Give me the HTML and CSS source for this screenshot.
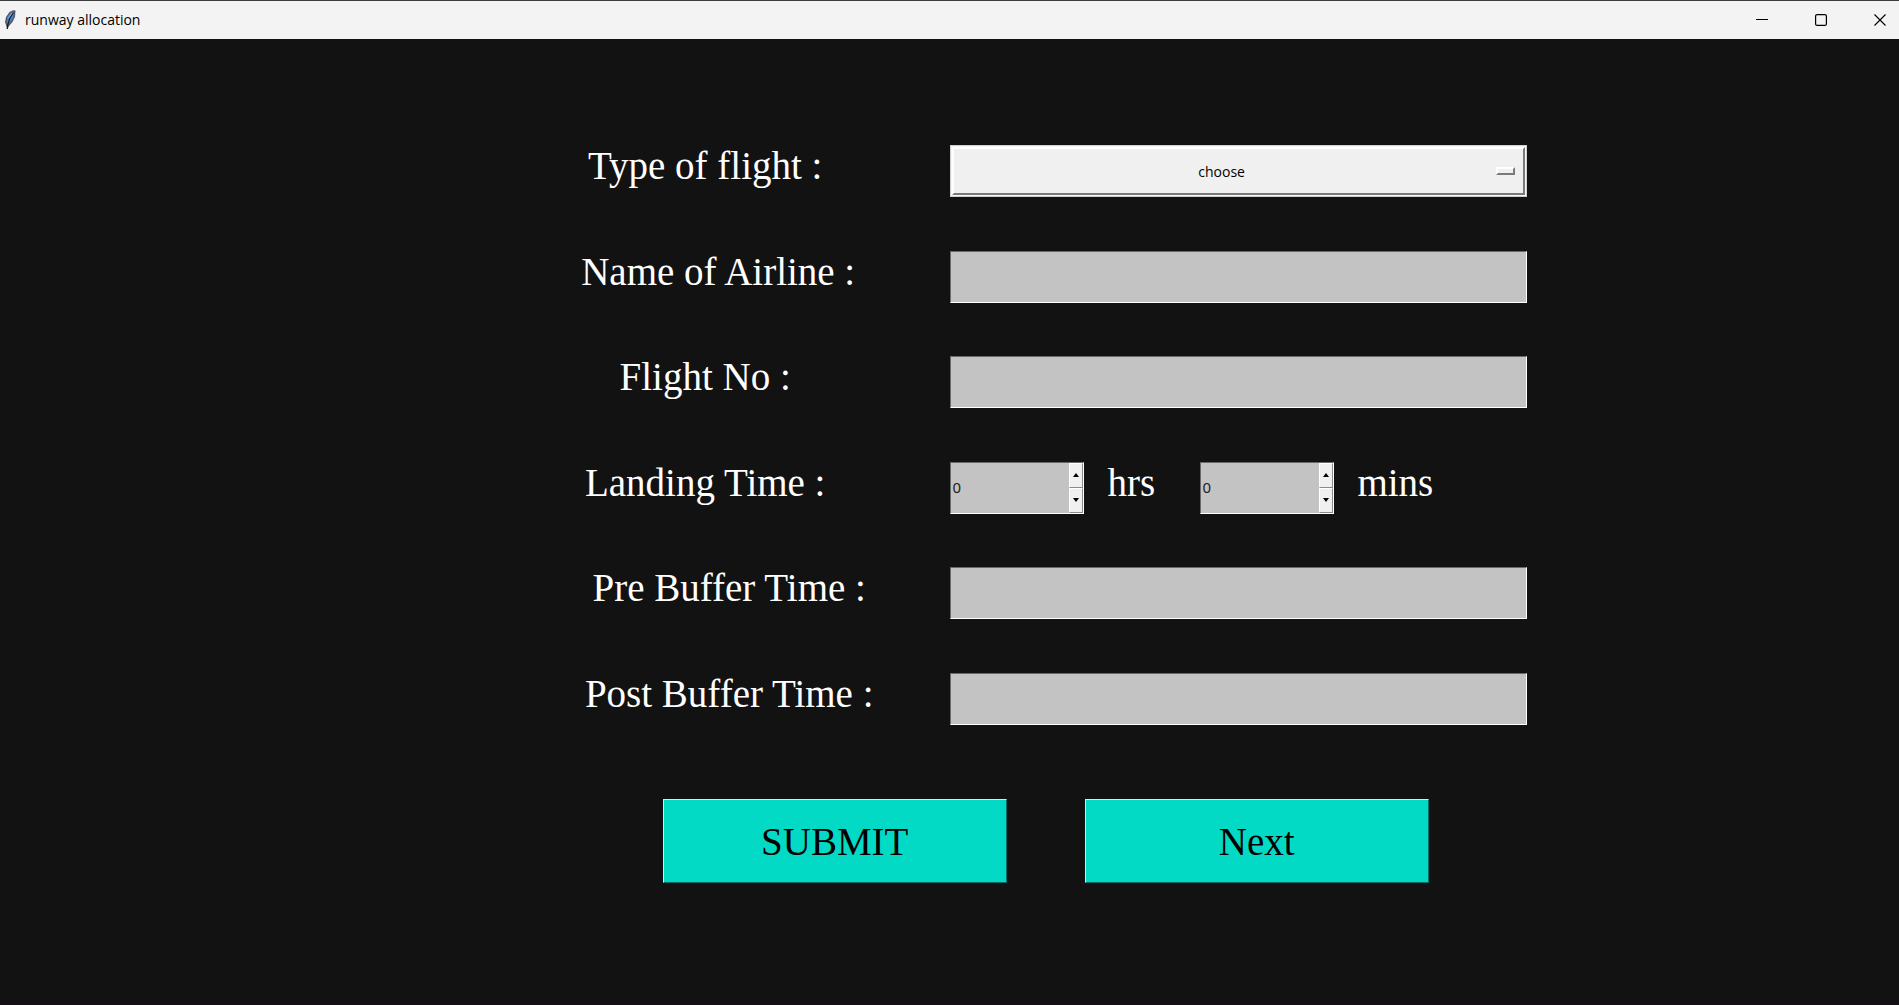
FILE: index.html
```html
<!DOCTYPE html>
<html lang="en">
<head>
<meta charset="utf-8">
<title>runway allocation</title>
<link rel="stylesheet" href="styles.css">
</head>
<body>
<header class="titlebar">
  <svg class="feather" viewBox="0 0 12 20" width="12" height="20" aria-hidden="true">
    <path d="M3 19 L2 15 L1 12 L2 7 L5.500 2 L9 .3 L11.500 .5 L11 7 L8.500 12 L5 16 Z" fill="#55585c"/>
    <path d="M2.600 12.500 L3.300 7 L6.500 2.800 L10 1.300 L9.700 6.500 L7 11.500 L4 15 Z" fill="#4a86cf"/>
    <path d="M9.500 2.500 L6 8 L4 14 L3.300 19" fill="none" stroke="#15191f" stroke-width="1.200"/>
    <path d="M8 3 L4.500 8" fill="none" stroke="#8fb8e8" stroke-width=".8"/>
  </svg>
  <h1 class="titlebar-text">runway allocation</h1>
  <div class="window-controls">
    <button class="window-button" type="button" aria-label="Minimize"><svg viewBox="0 0 12 12" width="12" height="12"><path d="M0 5.500H12" stroke="#000" fill="none"/></svg></button>
    <button class="window-button" type="button" aria-label="Maximize"><svg viewBox="0 0 12 12" width="12" height="12"><rect x=".6" y=".6" width="10.800" height="10.800" rx="1.500" stroke="#000" stroke-width="1.200" fill="none"/></svg></button>
    <button class="window-button" type="button" aria-label="Close"><svg viewBox="0 0 12 12" width="12" height="12"><path d="M.5 .5L11.500 11.500M11.500 .5L.5 11.500" stroke="#000" stroke-width="1.100" fill="none"/></svg></button>
  </div>
</header>
<main class="client">
  <form class="form">
    <div class="fields">
      <div class="row">
        <label class="caption" for="type">Type of flight :</label>
        <div class="control option-menu">
          <select class="option-select" id="type"><option>choose</option></select>
          <span class="option-indicator"></span>
        </div>
      </div>
      <div class="row">
        <label class="caption caption-medium" for="airline">Name of Airline :</label>
        <input class="control entry" id="airline" type="text">
      </div>
      <div class="row">
        <label class="caption" for="number">Flight No :</label>
        <input class="control entry" id="number" type="text">
      </div>
      <div class="row">
        <label class="caption" for="hours">Landing Time :</label>
        <div class="control time">
          <div class="time-part">
            <div class="spinbox">
              <input class="spin-input" id="hours" type="text" value="0">
              <div class="spin-buttons">
                <button class="spin-button" type="button" aria-label="More hours"><span class="arrow arrow-up"></span></button>
                <button class="spin-button" type="button" aria-label="Fewer hours"><span class="arrow arrow-down"></span></button>
              </div>
            </div>
            <label class="unit" for="hours">hrs</label>
          </div>
          <div class="time-part">
            <div class="spinbox">
              <input class="spin-input" id="minutes" type="text" value="0">
              <div class="spin-buttons">
                <button class="spin-button" type="button" aria-label="More minutes"><span class="arrow arrow-up"></span></button>
                <button class="spin-button" type="button" aria-label="Fewer minutes"><span class="arrow arrow-down"></span></button>
              </div>
            </div>
            <label class="unit" for="minutes">mins</label>
          </div>
        </div>
      </div>
      <div class="row">
        <label class="caption caption-wide" for="pre">Pre Buffer Time :</label>
        <input class="control entry" id="pre" type="text">
      </div>
      <div class="row">
        <label class="caption caption-wide" for="post">Post Buffer Time :</label>
        <input class="control entry" id="post" type="text">
      </div>
    </div>
    <div class="actions">
      <button class="action" type="button">SUBMIT</button>
      <button class="action" type="button">Next</button>
    </div>
  </form>
</main>
</body>
</html>
```
FILE: styles.css
```css
* {
  box-sizing: border-box;
}

body {
  margin: 0;
  min-height: 100vh;
  display: flex;
  flex-direction: column;
  background: #121212;
  font-family: "Open Sans", "Noto Sans", sans-serif;
}

.titlebar {
  display: flex;
  align-items: center;
  height: 39px;
  padding-left: 4px;
  border-top: 1px solid #3c3c3c;
  background: #f3f3f3;
}

.feather {
  flex: none;
}

.titlebar-text {
  margin: 0 auto 0 9px;
  font-size: 14px;
  line-height: 20px;
  font-weight: 400;
  color: #000;
}

.window-controls {
  display: flex;
  gap: 21px;
  height: 100%;
}

.window-button {
  display: flex;
  align-items: center;
  justify-content: center;
  width: 38px;
  padding: 0;
  border: 0;
  background: none;
}

.client {
  flex: 1;
  padding-top: 106px;
  border-bottom: 4px solid #150e14;
}

.fields {
  display: grid;
  grid-template-rows: repeat(6, 1fr);
  height: 63vh;
  min-height: 480px;
}

.row {
  display: grid;
  grid-template-columns: 390fr 576fr;
  align-items: start;
  margin-left: 29.5%;
  margin-right: 19.6%;
}

.caption,
.unit {
  font-family: "Liberation Serif", serif;
  font-size: 39px;
  line-height: 42px;
  color: #fff;
  white-space: nowrap;
}

.caption {
  width: 290px;
  text-align: center;
}

.caption-medium {
  width: 316px;
}

.caption-wide {
  width: 338px;
}

.control {
  width: 100%;
  height: 52px;
}

.entry {
  padding: 0 4px;
  border: 1px solid;
  border-color: #696969 #fff #fff #696969;
  border-radius: 0;
  background: #c3c3c3;
  font: 15px "Open Sans", sans-serif;
}

.option-menu {
  position: relative;
  padding: 1px;
  background: #f8f8f8;
  border: 1px solid #d0d0d0;
}

.option-select {
  display: block;
  width: 100%;
  height: 100%;
  padding: 0 34px 0 0;
  appearance: none;
  border: 2px solid;
  border-color: #fff #7a7a7a #7a7a7a #fff;
  border-radius: 0;
  background: #f0f0f0;
  color: #000;
  font: 14px "Open Sans", sans-serif;
  text-align: center;
  text-align-last: center;
}

.option-indicator {
  position: absolute;
  right: 11px;
  top: 21px;
  width: 19px;
  height: 8px;
  border: 2px solid;
  border-color: #fff #7a7a7a #7a7a7a #fff;
  pointer-events: none;
}

.time {
  display: flex;
}

.time-part {
  display: flex;
  gap: 23px;
  width: 250px;
}

.spinbox {
  display: flex;
  width: 134px;
  height: 52px;
  border: 1px solid;
  border-color: #696969 #fff #fff #696969;
  background: #c3c3c3;
}

.spin-input {
  flex: 1;
  min-width: 0;
  padding: 0 1px 2px;
  border: 0;
  background: none;
  color: #222;
  font: 15px "Noto Sans", sans-serif;
}

.spin-buttons {
  display: flex;
  flex-direction: column;
  width: 14px;
}

.spin-button {
  flex: 1;
  display: flex;
  align-items: center;
  justify-content: center;
  padding: 0;
  border: 1px solid;
  border-color: #fff #8a8a8a #8a8a8a #fff;
  background: #f0f0f0;
}

.arrow {
  border: 3px solid transparent;
}

.arrow-up {
  border-top: 0;
  border-bottom: 4px solid #000;
}

.arrow-down {
  border-bottom: 0;
  border-top: 4px solid #000;
}

.actions {
  display: flex;
  gap: 78px;
  margin-top: 21px;
  padding-left: 34.9%;
}

.action {
  width: 344px;
  height: 84px;
  padding: 0;
  border: 1px solid;
  border-color: #a8fff5 #026d65 #026d65 #a8fff5;
  background: #03dac6;
  color: #000;
  font: 39px "Liberation Serif", serif;
}
```
